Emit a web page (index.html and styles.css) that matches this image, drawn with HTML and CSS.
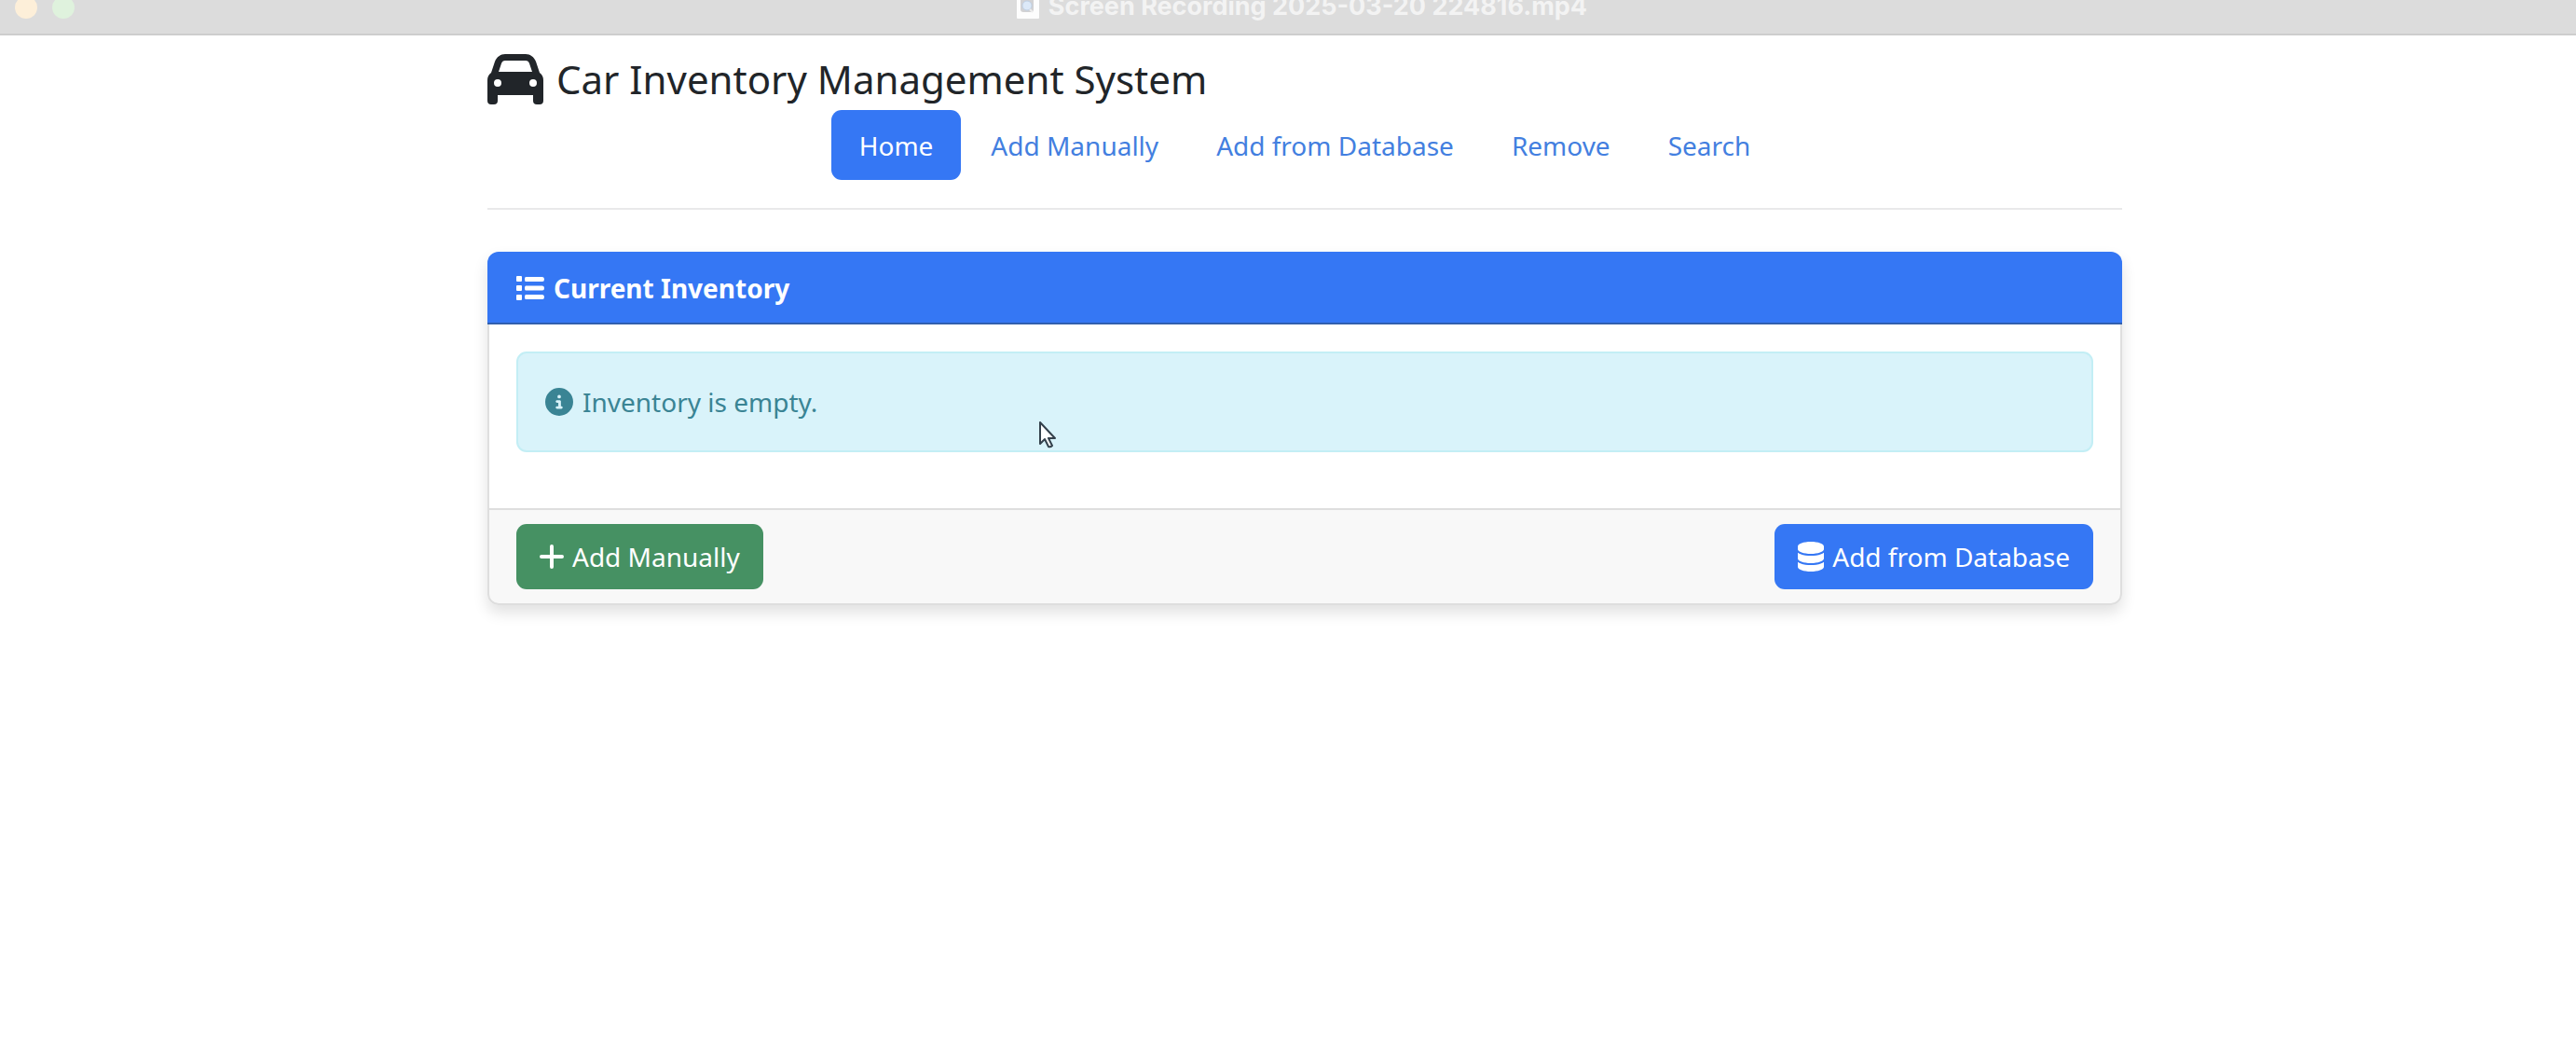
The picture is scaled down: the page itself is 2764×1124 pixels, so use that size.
FILE: index.html
```html
<!DOCTYPE html>
<html lang="en">
<head>
<meta charset="utf-8">
<meta name="viewport" content="width=device-width, initial-scale=1">
<title>Car Inventory Management System</title>
<link rel="stylesheet" href="styles.css">
</head>
<body>
<div class="titlebar">
  <span class="dots"><span class="dot dot-yellow"></span><span class="dot dot-green"></span></span>
  <span class="file">
    <svg class="file-icon" viewBox="0 0 24 28" aria-hidden="true"><rect width="24" height="28" rx="1" fill="#fdfdfd"/><rect x="4" y="4" width="14" height="17" rx="3" fill="#d2d2d4"/><circle cx="11" cy="14" r="5" fill="#dce9f8" stroke="#bfd0e4"/><path d="M14 18l3 3" stroke="#eee" stroke-width="2"/></svg>
    <span>Screen Recording 2025-03-20 224816.mp4</span>
  </span>
</div>
<div class="container">
  <header class="header">
    <h1 class="brand">
      <svg class="car" viewBox="0 0 60 54" aria-hidden="true"><path fill="#212529" fill-rule="evenodd" d="M19 0H41C46 0 50 3 52 8L56 20C59 22 60 25 60 28V50Q60 54 56 54H53Q49 54 49 50V44H11V50Q11 54 7 54H4Q0 54 0 50V28C0 25 1 22 4 20L8 8C10 3 14 0 19 0ZM19 7Q16 7 15 10L12 19H48L45 10Q44 7 41 7ZM11 27A4 4 0 1 0 11 35A4 4 0 1 0 11 27ZM49 27A4 4 0 1 0 49 35A4 4 0 1 0 49 27Z"/></svg>
      <span>Car Inventory Management System</span>
    </h1>
    <nav class="nav">
      <a class="nav-link active" href="#home" aria-current="page">Home</a>
      <a class="nav-link" href="#manual">Add Manually</a>
      <a class="nav-link" href="#database">Add from Database</a>
      <a class="nav-link" href="#remove">Remove</a>
      <a class="nav-link" href="#search">Search</a>
    </nav>
  </header>
  <main class="card">
    <h2 class="card-header">
      <svg class="icon" viewBox="0 0 30 30" aria-hidden="true"><path fill="currentColor" d="M1 2h4q1 0 1 1v4q0 1-1 1H1Q0 8 0 7V3q0-1 1-1zM1 12h4q1 0 1 1v4q0 1-1 1H1q-1 0-1-1v-4q0-1 1-1zM1 22h4q1 0 1 1v4q0 1-1 1H1q-1 0-1-1v-4q0-1 1-1zM10 3h18q2 0 2 2.500t-2 2.500H10q-1 0-1-2.500t1-2.500zM10 12.500h18q2 0 2 2.500t-2 2.500H10q-1 0-1-2.500t1-2.500zM10 22h18q2 0 2 2.500t-2 2.500H10q-1 0-1-2.500t1-2.500z"/></svg>
      <span>Current Inventory</span>
    </h2>
    <div class="card-body">
      <div class="alert" role="alert">
        <svg class="icon" viewBox="0 0 512 512" aria-hidden="true"><path fill="currentColor" d="M256 512A256 256 0 1 0 256 0a256 256 0 1 0 0 512zM216 336h24V272H216c-13.300 0-24-10.700-24-24s10.700-24 24-24h48c13.300 0 24 10.700 24 24v88h8c13.300 0 24 10.700 24 24s-10.700 24-24 24H216c-13.300 0-24-10.700-24-24s10.700-24 24-24zm40-208a32 32 0 1 1 0 64 32 32 0 1 1 0-64z"/></svg>
        <span>Inventory is empty.</span>
      </div>
    </div>
    <footer class="card-footer">
      <button class="btn btn-success" type="button">
        <svg class="icon-plus" viewBox="0 0 26 26" aria-hidden="true"><path d="M13 2V24M2 13H24" stroke="currentColor" stroke-width="4" stroke-linecap="round"/></svg>
        <span>Add Manually</span>
      </button>
      <button class="btn btn-primary" type="button">
        <svg class="icon-db" viewBox="0 0 448 512" aria-hidden="true"><path fill="currentColor" d="M448 80v48c0 44.200-100.300 80-224 80S0 172.200 0 128V80C0 35.800 100.300 0 224 0S448 35.800 448 80zM393.200 214.700c20.800-7.400 39.900-16.900 54.800-28.600V288c0 44.200-100.300 80-224 80S0 332.200 0 288V186.100c14.900 11.800 34 21.200 54.800 28.600C99.700 230.700 159.500 240 224 240s124.300-9.300 169.200-25.300zM0 346.100c14.900 11.800 34 21.200 54.800 28.600C99.700 390.700 159.500 400 224 400s124.300-9.300 169.200-25.300c20.800-7.400 39.900-16.900 54.800-28.600V432c0 44.200-100.300 80-224 80S0 476.200 0 432V346.100z"/></svg>
        <span>Add from Database</span>
      </button>
    </footer>
  </main>
</div>
<svg class="cursor" viewBox="0 0 18 29" aria-hidden="true"><path d="M1 1V24L6 19L10 27Q12 28 14 26L10 18H17Z" fill="#fff" stroke="#34414c" stroke-width="2" stroke-linejoin="round"/></svg>
</body>
</html>
```
FILE: styles.css
```css
* { box-sizing: border-box; }
body {
  min-height: 100vh;
  margin: 0;
  background: #fff;
  color: #212529;
  font: 28px/44px "Noto Sans", "Open Sans", sans-serif;
}
svg { display: block; flex: none; }

.titlebar {
  position: relative;
  display: flex;
  justify-content: center;
  height: 38px;
  padding-left: 30px;
  overflow: hidden;
  background: #dcdcdc;
  border-bottom: 2px solid #cdcdcd;
}
.dots {
  position: absolute;
  left: 16px;
  top: -4px;
  display: flex;
  gap: 16px;
}
.dot { width: 24px; height: 24px; border-radius: 50%; }
.dot-yellow { background: #fdefd9; }
.dot-green { background: #dff2dd; }
.file {
  display: flex;
  align-items: flex-end;
  gap: 10px;
  height: 20px;
  color: #f3f3f3;
  font: 700 27px/26px Inter, sans-serif;
  white-space: nowrap;
}
.file-icon { width: 24px; height: 28px; }

.container {
  width: calc(100% - 1010px);
  min-width: 1200px;
  margin: 0 auto;
  position: relative;
  left: 18px;
}
.header {
  padding: 17px 0 30px;
  border-bottom: 2px solid #e9e9ea;
}
.brand {
  display: flex;
  align-items: center;
  gap: 14px;
  margin: 0 0 3px;
  font-size: 42px;
  font-weight: 400;
  line-height: 60px;
}
.car { width: 60px; height: 54px; }
.nav { display: flex; justify-content: center; gap: 2px; }
.nav-link {
  padding: 16px 30px 15px;
  border-radius: 11px;
  color: #437fe0;
  text-decoration: none;
}
.nav-link.active { background: #3577f4; color: #fff; }

.card {
  margin-top: 45px;
  border-radius: 12px;
  box-shadow: 0 8px 16px rgba(0, 0, 0, .12);
}
.card-header {
  display: flex;
  align-items: center;
  gap: 10px;
  margin: 0;
  padding: 17px 31px 15px;
  background: #3577f4;
  border-bottom: 2px solid #315fae;
  border-radius: 12px 12px 0 0;
  color: #fff;
  font-size: 28px;
  font-weight: 700;
}
.icon { width: 30px; height: 30px; }
.card-body {
  padding: 29px 29px 60px;
  border: solid #dfdfdf;
  border-width: 0 2px;
}
.alert {
  display: flex;
  align-items: center;
  gap: 10px;
  padding: 30px 29px;
  border: 2px solid #c3eef5;
  border-radius: 11px;
  background: #d9f3fa;
  color: #3a8494;
}
.card-footer {
  display: flex;
  justify-content: space-between;
  padding: 15px 29px;
  background: #f8f8f8;
  border: 2px solid #dedede;
  border-radius: 0 0 12px 12px;
}
.btn {
  display: flex;
  align-items: center;
  gap: 9px;
  padding: 13px 25px;
  border: 0;
  border-radius: 11px;
  color: #fff;
  font: inherit;
  cursor: pointer;
}
.btn-success { background: #469163; }
.btn-primary { background: #3577f4; }
.icon-plus { width: 26px; height: 26px; }
.icon-db { width: 28px; height: 32px; }
.cursor {
  position: absolute;
  left: 1115px;
  top: 452px;
  width: 18px;
  height: 29px;
}
```
